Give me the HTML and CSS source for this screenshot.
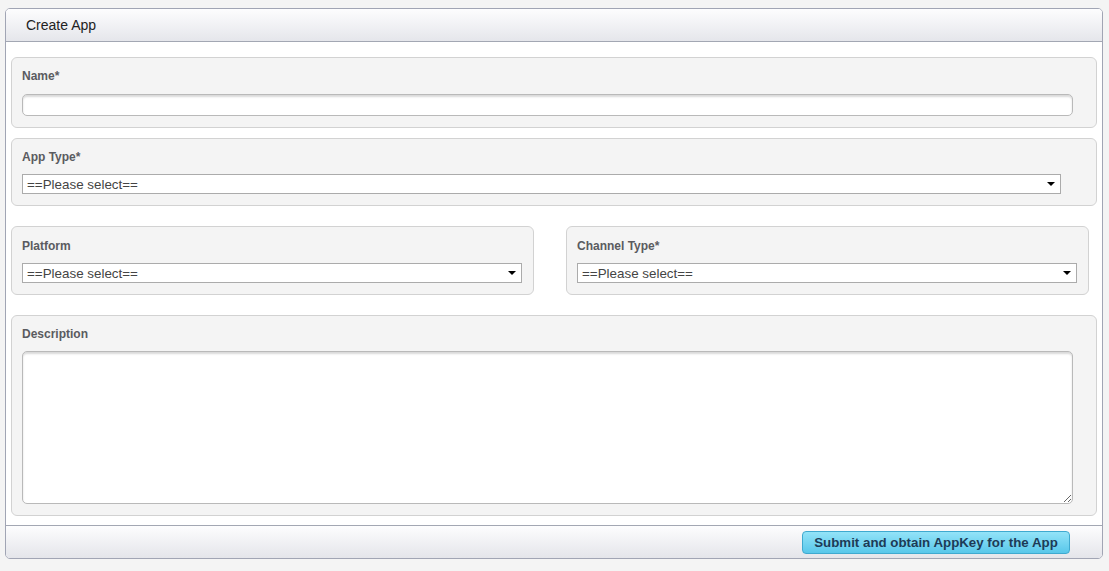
FILE: index.html
```html
<!DOCTYPE html>
<html>
<head>
<meta charset="utf-8">
<title>Create App</title>
<link rel="stylesheet" href="styles.css">
</head>
<body>
<div class="panel">
  <div class="panel-header">Create App</div>
  <div class="panel-body">
    <div class="field field-name">
      <label class="label">Name*</label>
      <input class="text-input" type="text">
    </div>
    <div class="field field-type">
      <label class="label">App Type*</label>
      <div class="select select-wide">
        <select><option>==Please select==</option></select>
      </div>
    </div>
    <div class="row">
      <div class="field field-half">
        <label class="label">Platform</label>
        <div class="select select-half">
          <select><option>==Please select==</option></select>
        </div>
      </div>
      <div class="field field-half">
        <label class="label">Channel Type*</label>
        <div class="select select-half">
          <select><option>==Please select==</option></select>
        </div>
      </div>
    </div>
    <div class="field field-desc">
      <label class="label">Description</label>
      <textarea class="text-area"></textarea>
    </div>
  </div>
  <div class="panel-footer">
    <button class="submit" type="button">Submit and obtain AppKey for the App</button>
  </div>
</div>
</body>
</html>
```
FILE: styles.css
```css
* { box-sizing: border-box; }

body {
  margin: 0;
  padding: 8px 0 0 5px;
  background: #f4f4f4;
  font-family: "Liberation Sans", Arial, sans-serif;
}

.panel {
  width: 1098px;
  border: 1px solid #a1a5b4;
  border-radius: 5px;
  background: #fff;
  overflow: hidden;
}

.panel-header {
  height: 33px;
  padding: 0 20px;
  line-height: 32px;
  font-size: 14px;
  color: #222;
  background: linear-gradient(#fdfdfe, #e5e6eb);
  border-bottom: 1px solid #a3a7b3;
}

.panel-body {
  padding: 15px 5px 9px 5px;
  display: flex;
  flex-direction: column;
  gap: 10px;
}

.field {
  background: #f4f4f4;
  border: 1px solid #d2d2d2;
  border-radius: 6px;
  padding: 11px 10px 11px 10px;
}

.label {
  display: block;
  font-size: 12px;
  line-height: 14px;
  font-weight: bold;
  color: #5a5b60;
  margin-bottom: 10px;
}

.field-name .label { margin-bottom: 11px; }

.row {
  display: flex;
  gap: 32px;
  margin: 10px 0;
}

.field-half {
  width: 523px;
  padding-top: 12px;
  padding-bottom: 11px;
}

.text-input {
  display: block;
  width: 1051px;
  height: 22px;
  border: 1px solid #b9b9b9;
  border-radius: 5px;
  box-shadow: inset 0 2px 2px rgba(0,0,0,0.15);
  background: #fff;
  outline: none;
}

.select {
  position: relative;
  height: 20px;
}
.select-wide { width: 1039px; }
.select-half { width: 500px; }

.select select {
  -webkit-appearance: none;
  appearance: none;
  display: block;
  width: 100%;
  height: 20px;
  border: 1px solid #ababab;
  border-radius: 0;
  background: #fff;
  padding: 0 0 0 4px;
  font-family: "Liberation Sans", Arial, sans-serif;
  font-size: 13.4px;
  color: #444;
  outline: none;
}

.select::after {
  content: "";
  position: absolute;
  right: 6px;
  top: 8px;
  border-left: 4px solid transparent;
  border-right: 4px solid transparent;
  border-top: 4px solid #000;
}

.text-area {
  display: block;
  width: 1051px;
  height: 153px;
  border: 1px solid #b9b9b9;
  border-radius: 5px;
  box-shadow: inset 0 2px 2px rgba(0,0,0,0.15);
  background: #fff;
  outline: none;
  resize: both;
}

.panel-footer {
  height: 33px;
  border-top: 1px solid #a3a7b3;
  background: linear-gradient(#fdfdfe, #e4e5ea);
  display: flex;
  justify-content: flex-end;
  align-items: center;
  padding-right: 32px;
}

.submit {
  width: 268px;
  height: 23px;
  border: 1px solid #3fa9cf;
  border-radius: 4px;
  background: linear-gradient(#93e3f8, #58c7ea);
  font-family: "Liberation Sans", Arial, sans-serif;
  font-size: 13.3px;
  font-weight: bold;
  color: #1d3b57;
  padding: 0;
}
```
